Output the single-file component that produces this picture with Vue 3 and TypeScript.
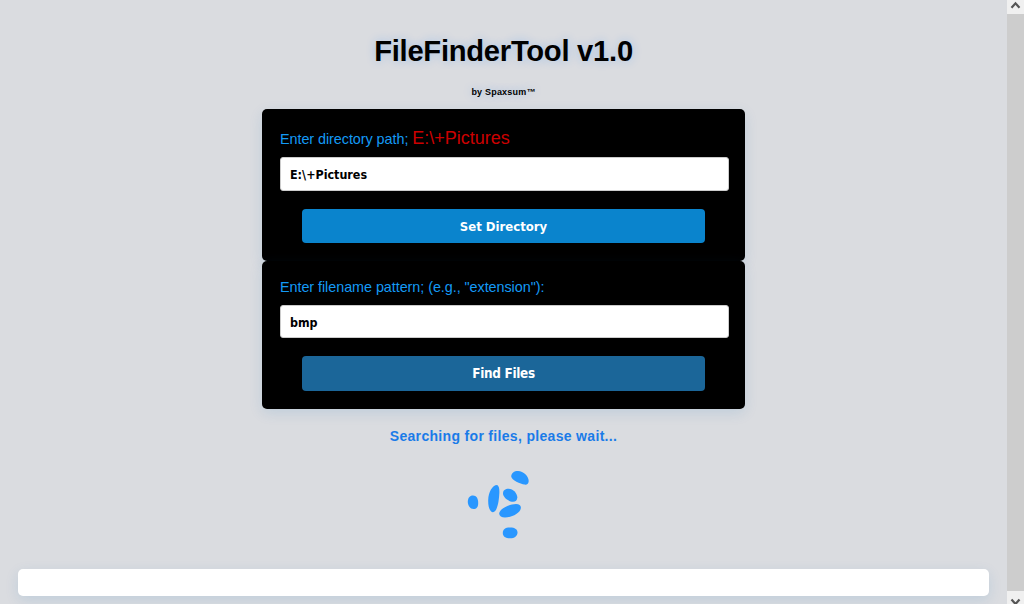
<script setup lang="ts">
import { ref } from 'vue'

const directory = ref<string>('E:\\+Pictures')
const currentDirectory = ref<string>('E:\\+Pictures')
const pattern = ref<string>('bmp')

function setDirectory(): void {
  currentDirectory.value = directory.value
}
</script>

<template>
  <div class="window">
    <main class="page">
      <h1>FileFinderTool v1.0</h1>
      <p class="author">by Spaxsum™</p>

      <form class="card first" @submit.prevent="setDirectory">
        <label for="directory"><span class="caption">Enter directory path;</span> <span class="path">{{ currentDirectory }}</span></label>
        <input id="directory" v-model="directory" type="text" />
        <button type="submit">Set Directory</button>
      </form>

      <form class="card second" @submit.prevent>
        <label for="pattern"><span class="caption">Enter filename pattern; (e.g., "extension"):</span></label>
        <input id="pattern" v-model="pattern" type="text" />
        <button type="submit" class="active">Find Files</button>
      </form>

      <p class="status">Searching for files, please wait...</p>

      <svg class="spinner" viewBox="0 0 80 84" width="80" height="84" fill="#2997ff">
        <path d="M51.2 14.5C51.4 11 54 9 58 9C63.500 9 68.700 14.300 68.700 19C68.700 21.500 67 23 64.500 22.600C60.500 22 51.500 18 51.200 14.500Z" />
        <path d="M37.200 23C39.200 24 39.700 28 39.200 33C38.700 41 36.800 50 33 50.200C30 50.200 28 45 28.200 38C28.500 30 32.500 22.800 37.200 23Z" />
        <path d="M43 31.500C43 28.300 45.300 26.800 48.500 26.800C53.300 26.800 57.300 31.500 57.300 35.500C57.300 38.300 55.500 39.800 53 39.800C48.500 39.800 43 35.200 43 31.500Z" />
        <path d="M39.200 51.800C38.800 47.500 48.500 42.100 56 42C59.500 42 61.300 43.700 60.800 46.200C60 51.500 51 55.500 45 55.500C41.500 55.500 39.400 54.200 39.200 51.800Z" />
        <path d="M7.800 39.800C7.800 35.800 9.800 33.500 13 33.500C16.500 33.500 18.200 36.500 18.200 41C18.200 45 16.500 47 13.500 47C10.200 47 7.800 43.800 7.800 39.800Z" />
        <path d="M42.800 71C42.800 67.500 45 65.500 50 65.500C55 65.500 57.500 67.500 57.500 70.500C57.500 74 54.500 76.300 50 76.300C45.500 76.300 42.800 74.500 42.800 71Z" />
      </svg>

      <div class="results"></div>
    </main>

    <div class="scrollbar" aria-hidden="true">
      <div class="arrow up">
        <svg width="17" height="14" viewBox="0 0 17 14"><path d="M4.500 7.800L8.500 3.300L12.500 7.800" /></svg>
      </div>
      <div class="thumb"></div>
      <div class="arrow down">
        <svg width="17" height="13" viewBox="0 0 17 13"><path d="M4.500 8.500L8.500 13L12.500 8.500" /></svg>
      </div>
    </div>
  </div>
</template>

<style>
body {
  margin: 0;
  overflow: hidden;
  background: #dadce0;
}
</style>

<style scoped>
* {
  box-sizing: border-box;
}

.window {
  display: flex;
  height: 604px;
  overflow: hidden;
  background: #dadce0;
  font-family: 'Liberation Sans', Arial, sans-serif;
}

.page {
  display: flex;
  flex: 1;
  flex-direction: column;
  align-items: center;
  min-width: 0;
  padding: 33px 18px 0;
}

h1 {
  height: 36px;
  margin: 0;
  color: #000;
  font-size: 29.2px;
  line-height: 36px;
  letter-spacing: -0.27px;
  white-space: nowrap;
  text-shadow: 0 0 10px rgba(30, 130, 255, 0.28);
}

.author {
  height: 12px;
  margin: 17px 0 11px;
  color: #000;
  font-size: 9px;
  font-weight: bold;
  line-height: 12px;
  letter-spacing: 0.2px;
  text-shadow: 0 0 10px rgba(30, 130, 255, 0.28);
}

.card {
  display: flex;
  flex-direction: column;
  width: 483px;
  padding: 18px 16px 18px 18px;
  border-radius: 5px;
  background: #000;
  box-shadow: 0 4px 14px rgba(0, 110, 180, 0.12);
}

.first {
  height: 152px;
}

.second {
  height: 148px;
}

label {
  height: 22px;
  margin-bottom: 8px;
  color: #149af5;
  font-size: 14.4px;
  line-height: 22px;
  letter-spacing: -0.06px;
  white-space: nowrap;
}

.second label {
  height: 18px;
  line-height: 17px;
}

.path {
  color: #cc0000;
  font-size: 18px;
  letter-spacing: 0;
}

input {
  width: 449px;
  height: 34px;
  margin: 0 0 18px;
  padding: 1px 9px 0;
  border: 1px solid #ccc;
  border-radius: 3px;
  outline: none;
  background: #fff;
  color: #000;
  font: bold 12.4px 'DejaVu Sans Condensed', 'DejaVu Sans', sans-serif;
  font-stretch: condensed;
}

.second input {
  height: 33px;
  padding-top: 2px;
}

button {
  width: 403px;
  height: 34px;
  margin: 0 0 0 22px;
  padding: 0;
  border: 0;
  border-radius: 4px;
  background: #0a84cd;
  color: #fff;
  font: bold 13px 'DejaVu Sans Condensed', 'DejaVu Sans', sans-serif;
  font-stretch: condensed;
}

button.active {
  height: 35px;
  background: #1b6699;
  font-size: 13.4px;
  letter-spacing: -0.3px;
}

.status {
  height: 18px;
  margin: 18px 0 17px;
  color: #1a7be8;
  font-size: 14px;
  font-weight: bold;
  line-height: 18px;
  letter-spacing: 0.32px;
}

.spinner {
  flex: none;
  margin-right: 7px;
}

.results {
  flex: none;
  width: 971px;
  height: 27px;
  margin-top: 23px;
  border-radius: 5px;
  background: #fff;
  box-shadow: 0 4px 14px rgba(0, 110, 180, 0.12);
}

.scrollbar {
  display: flex;
  flex: none;
  flex-direction: column;
  width: 17px;
  background: #f0f0f0;
}

.thumb {
  flex: 1;
  background: #cdcdcd;
}

.arrow {
  height: 14px;
}

.down {
  height: 13px;
}

.arrow svg {
  display: block;
  fill: none;
  stroke: #555;
  stroke-width: 2.2;
}
</style>
